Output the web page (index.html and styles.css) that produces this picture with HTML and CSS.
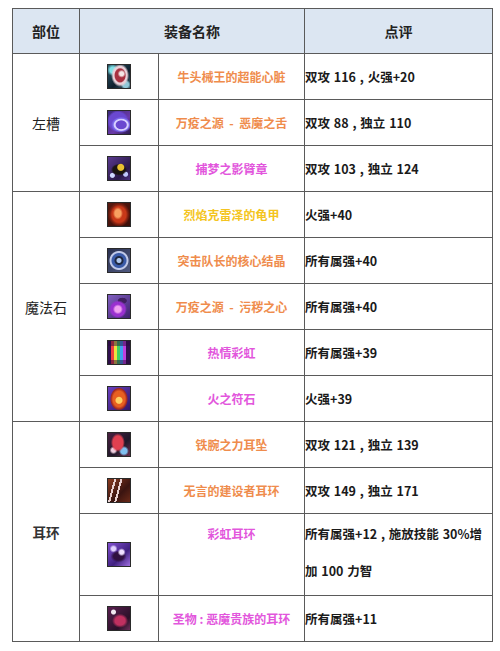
FILE: index.html
```html
<!DOCTYPE html>
<html lang="zh-CN">
<head>
<meta charset="utf-8">
<title>装备点评</title>
<link rel="stylesheet" href="styles.css">
</head>
<body>
<table class="gear">
  <colgroup>
    <col class="c-slot">
    <col class="c-icon">
    <col class="c-name">
    <col class="c-note">
  </colgroup>
  <thead>
    <tr class="head">
      <th>部位</th>
      <th colspan="2">装备名称</th>
      <th>点评</th>
    </tr>
  </thead>
  <tbody>
    <tr>
      <td class="slot" rowspan="3">左槽</td>
      <td class="ic"><span class="icon i1"></span></td>
      <td class="name orange">牛头械王的超能心脏</td>
      <td class="note">双攻 116 , 火强+20</td>
    </tr>
    <tr>
      <td class="ic"><span class="icon i2"></span></td>
      <td class="name orange">万疫之源 &nbsp;- &nbsp;恶魔之舌</td>
      <td class="note">双攻 88 , 独立 110</td>
    </tr>
    <tr>
      <td class="ic"><span class="icon i3"></span></td>
      <td class="name pink">捕梦之影臂章</td>
      <td class="note">双攻 103 , 独立 124</td>
    </tr>
    <tr>
      <td class="slot" rowspan="5">魔法石</td>
      <td class="ic"><span class="icon i4"></span></td>
      <td class="name yellow">烈焰克雷泽的龟甲</td>
      <td class="note">火强+40</td>
    </tr>
    <tr>
      <td class="ic"><span class="icon i5"></span></td>
      <td class="name orange">突击队长的核心结晶</td>
      <td class="note">所有属强+40</td>
    </tr>
    <tr>
      <td class="ic"><span class="icon i6"></span></td>
      <td class="name orange">万疫之源 &nbsp;- &nbsp;污秽之心</td>
      <td class="note">所有属强+40</td>
    </tr>
    <tr>
      <td class="ic"><span class="icon i7"></span></td>
      <td class="name pink">热情彩虹</td>
      <td class="note">所有属强+39</td>
    </tr>
    <tr>
      <td class="ic"><span class="icon i8"></span></td>
      <td class="name pink">火之符石</td>
      <td class="note">火强+39</td>
    </tr>
    <tr>
      <td class="slot bold" rowspan="4">耳环</td>
      <td class="ic"><span class="icon i9"></span></td>
      <td class="name orange">铁腕之力耳坠</td>
      <td class="note">双攻 121 , 独立 139</td>
    </tr>
    <tr>
      <td class="ic"><span class="icon i10"></span></td>
      <td class="name orange">无言的建设者耳环</td>
      <td class="note">双攻 149 , 独立 171</td>
    </tr>
    <tr class="tall">
      <td class="ic"><span class="icon i11"></span></td>
      <td class="name pink top">彩虹耳环</td>
      <td class="note top">所有属强+12 , 施放技能 30%增<br>加 100 力智</td>
    </tr>
    <tr>
      <td class="ic"><span class="icon i12"></span></td>
      <td class="name pink">圣物 : 恶魔贵族的耳环</td>
      <td class="note">所有属强+11</td>
    </tr>
  </tbody>
</table>
</body>
</html>
```

FILE: styles.css
```css
html, body {
  margin: 0;
  padding: 0;
  background: #ffffff;
}

body {
  font-family: "Noto Sans CJK SC", "Noto Sans", sans-serif;
  color: #1e1e1e;
}

.gear {
  border-collapse: collapse;
  table-layout: fixed;
  width: 480px;
  margin: 8px 0 0 12px;
}

.c-slot { width: 67px; }
.c-icon { width: 79px; }
.c-name { width: 146px; }
.c-note { width: 188px; }

.gear th,
.gear td {
  border: 1px solid #5a5a5a;
  padding: 0;
}

.head th {
  height: 44px;
  background: #dce6f2;
  font-size: 14px;
  font-weight: 700;
  text-align: center;
  color: #222;
}

.gear td {
  height: 45px;
  vertical-align: middle;
}

.slot {
  text-align: center;
  font-size: 14px;
  font-weight: 400;
  color: #222;
}

.slot.bold {
  font-size: 13.5px;
  font-weight: 700;
  color: #333;
}

.ic {
  text-align: center;
  line-height: 0;
}

.name {
  text-align: center;
  font-size: 12px;
  font-weight: 700;
}

.orange { color: #ef8c4c; }
.pink { color: #e256dc; }
.yellow { color: #f4c420; }

.note {
  text-align: left;
  font-size: 12.5px;
  font-weight: 700;
  color: #1a1a1a;
  padding-left: 1px;
  white-space: nowrap;
  word-spacing: 1px;
}

.tall td {
  height: 80px;
}

.tall .top {
  vertical-align: top;
  line-height: 37px;
  padding-top: 1px;
}

.icon {
  display: inline-block;
  width: 22px;
  height: 23px;
  border: 1px solid #2a2a2a;
  vertical-align: middle;
}

.i1 {
  background:
    radial-gradient(circle at 62% 38%, #f4e6e6 0 2px, transparent 4px),
    radial-gradient(ellipse 7px 9px at 55% 45%, #a83040 0 5px, #e8d0d8 6px 7px, transparent 9px),
    radial-gradient(circle at 22% 22%, #7fe0e6 0 3px, transparent 6px),
    radial-gradient(circle at 80% 85%, #90c8d8 0 3px, transparent 5px),
    linear-gradient(135deg, #2c5a6a, #0e1e2c 60%, #3a6070);
}
.i2 {
  background:
    radial-gradient(ellipse 10px 8px at 60% 60%, transparent 0 5px, #d8d0ff 6px 7px, #8070f0 8px, transparent 10px),
    radial-gradient(circle at 45% 45%, #6a48d0 0 9px, transparent 11px),
    linear-gradient(135deg, #3a2a7a, #6a3aa8 60%, #2a1a50);
}
.i3 {
  background:
    radial-gradient(circle at 58% 45%, #e8c030 0 3px, transparent 4px),
    radial-gradient(ellipse 8px 6px at 50% 55%, #1a1410 0 6px, transparent 8px),
    radial-gradient(circle at 20% 80%, #d0d8ff 0 2px, transparent 3px),
    radial-gradient(circle at 80% 75%, #c0c8ff 0 2px, transparent 3px),
    linear-gradient(135deg, #5a3a90, #2a1848 70%, #4a3080);
}
.i4 {
  background:
    radial-gradient(ellipse 4px 5px at 45% 45%, #f8a060 0 3px, transparent 5px),
    radial-gradient(ellipse 9px 10px at 50% 50%, #c83818 0 7px, #802010 9px, transparent 11px),
    linear-gradient(135deg, #5a1a10, #3a0e08);
}
.i5 {
  background:
    radial-gradient(circle at 50% 50%, #b0c8f0 0 2px, #202840 3px 4px, transparent 5px),
    radial-gradient(circle at 50% 50%, #3a5aa8 0 7px, #c0c8e8 8px 9px, transparent 10px),
    linear-gradient(135deg, #2a3050, #505a80);
}
.i6 {
  background:
    radial-gradient(circle at 45% 62%, #f0a0f0 0 3px, transparent 5px),
    radial-gradient(circle at 45% 62%, #9a30d0 0 7px, transparent 9px),
    radial-gradient(ellipse 6px 4px at 65% 25%, #402060 0 4px, transparent 5px),
    linear-gradient(135deg, #8060c0, #402070);
}
.i7 {
  background:
    linear-gradient(180deg, rgba(40,10,60,0.5) 0 5px, transparent 5px 19px, rgba(40,10,60,0.5) 19px),
    linear-gradient(90deg, #301050 0 3px, #f04040 3px 6px, #f0e040 6px 9px, #40d060 9px 12px, #40a0f0 12px 15px, #c040e0 15px 18px, #301050 18px);
}
.i8 {
  background:
    radial-gradient(circle at 50% 58%, #ffd060 0 3px, transparent 4px),
    radial-gradient(ellipse 7px 9px at 50% 52%, #e86020 0 6px, #a02820 8px, transparent 9px),
    linear-gradient(135deg, #6a40c0, #301868);
}
.i9 {
  background:
    radial-gradient(ellipse 6px 8px at 45% 42%, #e04050 0 5px, transparent 7px),
    radial-gradient(circle at 72% 78%, #80c0f0 0 3px, transparent 5px),
    radial-gradient(circle at 25% 75%, #f0d0e0 0 2px, transparent 4px),
    linear-gradient(135deg, #4a2040, #20182a 60%, #6a3050);
}
.i10 {
  background:
    linear-gradient(105deg, transparent 0 6px, #e8d0d0 6px 8px, transparent 8px 12px, #e8d0d0 12px 14px, transparent 14px),
    linear-gradient(135deg, #8a3a20, #3a1410 60%, #6a2a18);
}
.i11 {
  background:
    radial-gradient(circle at 62% 40%, #f0e0ff 0 2px, transparent 4px),
    radial-gradient(ellipse 8px 6px at 48% 58%, #301040 0 5px, transparent 8px),
    radial-gradient(circle at 25% 25%, #e0d0ff 0 2px, transparent 4px),
    linear-gradient(135deg, #8050d0, #402080 60%, #a070e0);
}
.i12 {
  background:
    radial-gradient(circle at 25% 22%, #f0e8f0 0 2px, transparent 3px),
    radial-gradient(ellipse 8px 7px at 55% 60%, #c03060 0 5px, transparent 8px),
    linear-gradient(135deg, #5a2050, #2a1028 70%, #70305a);
}
```
